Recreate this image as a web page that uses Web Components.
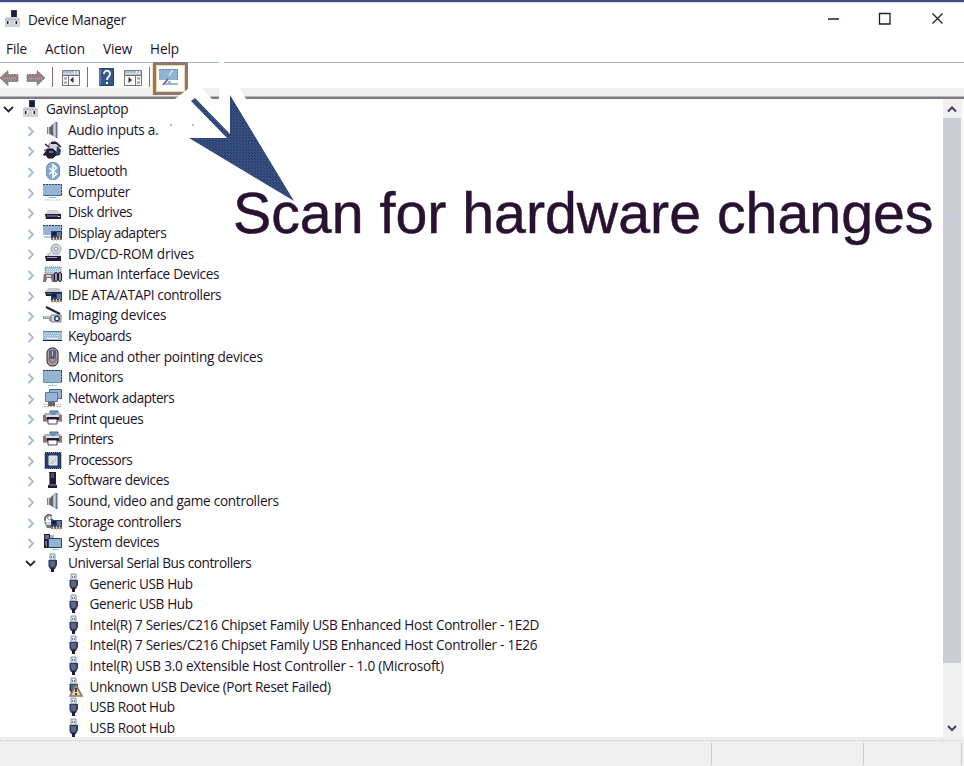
<!DOCTYPE html>
<html lang="en">
<head>
<meta charset="utf-8">
<title>Device Manager</title>
<style>
html,body{margin:0;width:964px;height:766px;overflow:hidden;background:#fff}
body{font-family:"Open Sans","Noto Sans",sans-serif;color:#1c1228}
</style>
</head>
<body>
<device-manager></device-manager>
<script>
const A='#94b4d2',N='#243f70',D='#251a33',B='#8d7572';
const usb=`<path d="M7 1h5v6H7z" fill="#dfe7ee" stroke="#7598bd"/><path d="M8 3h1v2H8zM10 3h1v2h-1z" fill="${B}"/><path d="M5 7h9v5l-2 4H7l-2-4z" fill="${N}"/><path d="M7 8h5v4l-1 2H8l-1-2z" fill="#6d6171"/><path d="M8 15h3v4H8z" fill="${D}"/><path d="M5.500 7v6" stroke="#7ba0c8"/>`;
const card=`<path d="M8 8h11v7H8z" fill="${N}"/><path d="M9 9h4v3H9z" fill="${D}"/><path d="M14 9h4v5h-4z" fill="#60769a"/><path d="M8 15h11v2H8z" fill="${B}"/><path d="M10 14h1v4h-1zM13 14h1v4h-1zM16 14h1v4h-1z" fill="#e8c782"/>`;
const speaker=`<path d="M4 7h4v7H4z" fill="${B}"/><path d="M7 7l6-6v17l-6-4z" fill="#a6b6c2"/><path d="M7 7l3-3v12l-3-2z" fill="#6d6268"/><path d="M13 2h1.500v16H13z" fill="#5f7899"/><path d="M5.500 7v7M11.500 5v10" stroke="#c9d4dc"/>`;
const printer=`<path d="M7 6V3h8v3" fill="${A}" stroke="${N}" stroke-width=".8"/><path d="M2 5h15l2 3v6H0V8z" fill="#a8afb6"/><path d="M7 4h7l-2 3H8z" fill="#6f94bb"/><path d="M0 7h4v6H0zM16 7h3v6h-3z" fill="${B}"/><path d="M3 7h13v2H3z" fill="#dde1e4"/><path d="M4 9h12v3H4z" fill="${D}"/><path d="M5 11h9v5H5z" fill="#fff" stroke="${D}" stroke-width=".8"/><path d="M0 13.500h3M16 13.500h3" stroke="${A}"/>`;
const pc=`<path d="M7 1h6v9H7z" fill="${N}"/><path d="M8 2h4v6H8z" fill="${D}"/><path d="M1 9.500l1.500-1.500h11L16 10v8H1z" fill="#cfd2d6"/><path d="M1 10.500h15" stroke="#a2adb8" stroke-dasharray="2 1"/><path d="M3 12h3v3H3zM10 12h3v3h-3z" fill="#f6f6f6"/><path d="M3 12h1.500v3H3zM11.500 12H13v3h-1.500z" fill="${D}"/>`;
const ICON={pc,usb,speaker,printer,
warn:usb+`<path d="M12 8l6 11H6z" fill="#f2d79b" stroke="${B}" stroke-width="1.6"/><path d="M12 11v4M12 16v2" stroke="${D}" stroke-width="1.6"/>`,
battery:`<path d="M6 4l5-3 5 3v8l-5 3-5-3z" fill="#cfd4d7" stroke="${B}"/><path d="M8 2h6v2H8z" fill="${D}"/><path d="M14 6l4 4-1 5-4 1z" fill="${N}"/><path d="M4 9h6l3 3v3l-3 3H5l-2-3H0M1 10h4" fill="${D}" stroke="${D}"/><path d="M6 11h4v2H6z" fill="#5c7292"/><path d="M2 4l4 3M13 3l5 4" stroke="${D}" stroke-width="1.5"/>`,
bluetooth:`<rect x="3" y="1" width="14" height="18" rx="6.5" fill="#86a9cc"/><rect x="3.500" y="1.500" width="13" height="17" rx="6" fill="none" stroke="#456f9f" stroke-dasharray="1 1"/><path d="M6.500 7l7 6-3.500 3.500v-13L13.500 7l-7 6" fill="none" stroke="#fff" stroke-width="1.5"/>`,
computer:`<path d="M0 2h19v12H0z" fill="${A}"/><path d="M0 2.500h19M18.500 2v12" stroke="#294975" stroke-dasharray="2 1"/><path d="M0 13.500h19" stroke="#46699a"/><path d="M6 15.500h7" stroke="#8fb0ce"/><path d="M1 18h18" stroke="#b5c3cf" stroke-dasharray="2 1"/>`,
disk:`<path d="M5 8h9l4 4H2z" fill="#d0d3d7"/><path d="M2 12h16v5H3z" fill="${D}"/><path d="M4 13h11v2H4z" fill="#4d5a6f"/><path d="M15 14h2v1h-2z" fill="#f2d89b"/>`,
display:`<path d="M0 2h19v10H0z" fill="${A}"/><path d="M0 2.500h19M18.500 2v9" stroke="${N}" stroke-dasharray="2 1"/><path d="M1 14h7" stroke="#9db8d0" stroke-width="1.500"/>`+card,
dvd:`<path d="M4 10h13l1 4H2z" fill="#dde0e3"/><path d="M2 13h16v5H3z" fill="${D}"/><path d="M4 14.500h10" stroke="#8ba8c6"/><circle cx="13" cy="6" r="5" fill="#cfd5d9" stroke="#93a3b2"/><circle cx="13" cy="6" r="1.800" fill="#fff" stroke="#829aaf"/><path d="M9 7l-4 6" stroke="${B}" stroke-dasharray="1 1"/>`,
hid:`<path d="M2 3h16v9H2z" fill="#a9c4da" stroke="${B}" stroke-dasharray="1 1"/><path d="M4 5.500h13M4 7.500h13" stroke="#e8eff4" stroke-dasharray="1 1"/><path d="M1 10h11v8H9l-1-4H4l-1 4H0z" fill="#796b70"/><path d="M3 11h5v2H3z" fill="#d1d3d6"/><rect x="11.500" y="8.500" width="3" height="9" rx="1.500" fill="#9f9ca2" stroke="${D}"/><rect x="15.500" y="8.500" width="3" height="9" rx="1.500" fill="#9f9ca2" stroke="${D}"/>`,
ide:`<path d="M5 3h11l3 4H2z" fill="#c8ccd1"/><path d="M2 7h17v4H3z" fill="${D}"/><path d="M4 8h8v1H4z" fill="#60769a"/>`+card,
imaging:`<path d="M3 2l14 7" stroke="${D}" stroke-width="2"/><path d="M8 10h10v7H8z" fill="#d5d9dc" stroke="${B}"/><path d="M0 11h8v5H6v-2H0z" fill="#8c949d"/><path d="M1 12h6" stroke="#f0f0f0"/><circle cx="14" cy="13.500" r="2.300" fill="#fff" stroke="${N}" stroke-width="1.500"/>`,
keyboard:`<path d="M0 5h19v10H0z" fill="#9dbcd7"/><path d="M0 5.500h19" stroke="#577fa8"/><path d="M0 14.500h19" stroke="${D}"/><path d="M2 7.500h16M1 9.500h16M2 11.500h16" stroke="#d6e3ed" stroke-dasharray="1 1"/><path d="M4 12.500h11" stroke="#eef2f4"/>`,
mouse:`<rect x="4" y="1" width="11" height="18" rx="5" fill="#a9a5a8" stroke="${D}"/><path d="M7 3v9M12 3v9" stroke="${D}"/><rect x="8" y="3" width="3" height="9" fill="#4c6288"/><path d="M6 11c1 6 6 6 7 0" stroke="${B}" stroke-width="2"/><path d="M9.500 4v5" stroke="#a9cbe7"/>`,
monitor:`<path d="M.500 3.500h18v12H.500z" fill="${A}" stroke="#6e93bb"/><path d="M0 3.500h19M18.500 4v12" stroke="${N}" stroke-dasharray="2 1"/><path d="M9.500 16v2M5 18.500h9" stroke="#a9cbe2"/>`,
network:`<path d="M6.500 1.500h12v9h-12z" fill="${A}" stroke="#3f628f"/><path d="M2.500 4.500h12v9h-12z" fill="${A}" stroke="#537ca8"/><path d="M0 16.500h18" stroke="#c4cfd6"/><path d="M5 14h7v4H5z" fill="#756267"/><path d="M1 18.500h17" stroke="#97a9b8" stroke-dasharray="2 1"/>`,
cpu:`<path d="M2 2.500h16v16H2z" fill="${N}" stroke="${D}" stroke-dasharray="1 1"/><path d="M6 6h8v9H6z" fill="#c7ced2" stroke="#eef0f1"/><path d="M7 12l5-5M7 9l2-2M11 14l2-2" stroke="#fff"/>`,
software:`<path d="M6 2h7v12H6z" fill="${D}"/><path d="M8 3h3v5H8z" fill="#4d5067"/><path d="M5 15h9v3H5z" fill="${D}"/><path d="M6 14h7v2H6z" fill="#5a5062"/><path d="M6.500 3v11" stroke="#68788f"/>`,
storage:`<path d="M2 9c-1-5 3-8 7-5M4 5l6 3" fill="none" stroke="#565467" stroke-width="1.500"/><circle cx="6.500" cy="6" r="1.800" fill="#fff" stroke="#889bae"/><path d="M1 10h9l2 3-2 3H4z" fill="#707681"/><path d="M3 10h6v3H3z" fill="#d1d5d8"/>`+card,
system:`<path d="M1 2h6v14H1z" fill="${D}"/><path d="M2 3h4v4H2zM2 9h2v4H2z" fill="#787078"/><path d="M7 3h4v3H7z" fill="#a4b4c3"/><path d="M5.500 6.500h13v9h-13z" fill="${A}" stroke="${N}"/><path d="M9 17.500h7" stroke="#b5cddd"/><path d="M3 14h1" stroke="#e7c98f"/>`
};
class PixelIcon extends HTMLElement{
 connectedCallback(){this.attachShadow({mode:'open'}).innerHTML=`<style>:host{display:block;width:20px;height:20px;flex:none}svg{display:block}</style><svg width="20" height="20" viewBox="0 0 20 20" fill="none">${ICON[this.getAttribute('name')]}</svg>`}
}
/* A single-line label whose tracking is adjusted to fill a given width. */
class FitLabel extends HTMLElement{
 connectedCallback(){
  this.attachShadow({mode:'open'}).innerHTML='<style>:host{display:block;white-space:pre;flex:none}span{display:inline-block}</style><span><slot></slot></span>';
  const s=this.shadowRoot.querySelector('span'),w=+this.getAttribute('w');
  if(w){const n=this.textContent.length;s.style.letterSpacing=((w-s.getBoundingClientRect().width)/n)+'px'}
 }
}
class TreeRow extends HTMLElement{
 connectedCallback(){
  const l=+this.getAttribute('level'),st=this.getAttribute('state');
  const arrow=st==='open'?'<path d="M1 4l4.500 4.500L10 4" stroke="#2d2438" stroke-width="1.800"/>':st==='closed'?'<path d="M3.500 3L8 7.500 3.500 12" stroke="#a6bccd" stroke-width="1.800"/>':'';
  this.attachShadow({mode:'open'}).innerHTML=`<style>:host{display:flex;box-sizing:border-box;height:20.63px;flex:none;align-items:flex-start;padding-left:${[3,25,47][l]}px;font-size:13.6px;line-height:20px}svg{width:11px;height:14px;flex:none;margin:4px ${[8,7,6][l]}px 0 0;fill:none}fit-label{margin-left:${l===0?4:l===1?5:5.500}px;margin-top:.2px}</style><svg>${arrow}</svg><pixel-icon name="${this.getAttribute('icon')}"></pixel-icon><fit-label w="${this.getAttribute('w')-.8}">${this.textContent}</fit-label>`;
 }
}
class TitleBar extends HTMLElement{
 connectedCallback(){this.attachShadow({mode:'open'}).innerHTML=`<style>:host{display:flex;box-sizing:border-box;height:37px;border-top:2px solid #3b5080;align-items:center;padding:0 20px 2px 4px;font-size:13.6px;box-shadow:inset 0 1px #d3d9e0}fit-label{margin-left:4px;margin-top:1px}.s{flex:1}.c{display:block;fill:none;stroke:#251833;margin-top:-1px}</style>
 <pixel-icon name="pc"></pixel-icon><fit-label w="98">Device Manager</fit-label><div class="s"></div>
 <svg class="c" width="118" height="18"><path d="M2 10h11" stroke-width="1.500"/><path d="M53.500 4.500h10.500v10.500h-10.500z" stroke-width="1.300"/><path d="M106.500 4.500l10 10M116.500 4.500l-10 10" stroke-width="1.300"/></svg>`}
}
class MenuBar extends HTMLElement{
 connectedCallback(){this.attachShadow({mode:'open'}).innerHTML=`<style>:host{display:flex;height:25px;align-items:center;padding-left:6px;font-size:13.6px;border-bottom:1px solid #9bb9d2}fit-label{margin-right:18px;margin-top:-2px}</style><fit-label w="21">File</fit-label><fit-label w="40">Action</fit-label><fit-label w="29">View</fit-label><fit-label w="29">Help</fit-label>`}
}
class ToolBar extends HTMLElement{
 connectedCallback(){
  const L='#84706f',win=p=>`<svg width="20" height="18"><path d="M1.500 1.500h17v15h-17z" fill="#f7f8f8" stroke="${L}"/><path d="M2 2h16v4H2z" fill="#a5bfd4"/><path d="M2 4.500h16" stroke="#d8e2ea"/><path d="M13 2h1v2h-1zM16 2h1v2h-1z" fill="#fff"/><path d="M1 6.500h18" stroke="${L}"/>${p}</svg>`;
  const left=win(`<path d="M7.500 7v9" stroke="${L}"/><path d="M3 9.500h3M3 13.500h3" stroke="#86a3bc" stroke-width="2"/><path d="M12.500 8v6L9 11z" fill="#3a2b3c"/>`),right=win(`<path d="M12.500 7v9" stroke="${L}"/><path d="M14 9.500h3M14 13.500h3" stroke="#86a3bc" stroke-width="2"/><path d="M5.500 8v6L9 11z" fill="#3a2b3c"/>`);
  const arr=d=>`<svg width="20" height="18" viewBox="0 0 20 18"><path ${d} d="M0 9l8-7.500V5.500h10v7H8v4z" fill="#938286" stroke="#8a7070" stroke-dasharray="2 1"/><path ${d} d="M3 9.500h14" stroke="#a9b0ba" stroke-dasharray="1 1" stroke-width="1.500"/></svg>`;
  this.attachShadow({mode:'open'}).innerHTML=`<style>:host{display:grid;grid-template-columns:26px 26px 9px 26px 10px 26px 26px 4px 35px;height:36px;box-sizing:border-box;background:linear-gradient(#fff 25px,#efefef 25px 33px,#a6bed3 33px);border-bottom:2px solid #8f7674}svg{display:block;fill:none;margin-top:6px}.v{width:1px;height:20px;background:#866e6d;margin-top:4px}.box{box-sizing:border-box;width:35px;height:33px;border:3px solid #8f7674;background:#fff;margin-top:-1px;box-shadow:inset 0 0 0 1px #f0d79d,-1px 0 #f4dfaf;position:relative;padding:0 0 0 3px}.box svg{margin-top:1px}</style>
 ${arr('')}${arr('transform="translate(19 0) scale(-1 1)"')}<i class="v"></i>${left}<i class="v"></i><svg width="20" height="20" style="margin-top:5px"><path d="M2.500.500h14v17h-14z" fill="#315889" stroke="#263f66"/><path d="M3 1v16" stroke="#91aeca"/><path d="M7 6c0-4.500 6.500-4 6 0 0 2.500-3 2.500-3 6" stroke="#e4ebf1" stroke-width="2"/><path d="M9 14h2v2H9z" fill="#fff"/></svg>${right}<i class="v"></i>
 <div class="box"><svg width="22" height="22"><path d="M0 3h19v11H0z" fill="#91b2d1"/><path d="M0 3.500h19M18.500 3v11" stroke="#5f88b4" stroke-dasharray="2 1"/><path d="M13.500 4l-3.500 6" stroke="#e1ebf2" stroke-width="1.300"/><path d="M9 13l-5 6" stroke="#6b6370" stroke-width="1.800"/><path d="M9 16h3M6 18h13" stroke="#79a0c3" stroke-width="1.500"/></svg></div>`}
}
class ScrollBar extends HTMLElement{
 connectedCallback(){this.attachShadow({mode:'open'}).innerHTML=`<style>:host{display:flex;flex-direction:column;width:18px;background:#f0f0f0;margin-right:1px;border-right:2px solid #f4f5f6}svg{display:block;fill:none;stroke:#454158;stroke-width:2;flex:none}.t{height:545px;background:#c9ced4 radial-gradient(circle at 3px 3px,#dfd8bd .6px,transparent 1px) 0 0/8px 11px}.s{flex:1}</style><svg width="18" height="19"><path d="M5 12.500l4-4 4 4"/></svg><div class="t"></div><div class="s"></div><svg width="18" height="18"><path d="M5 7l4 4 4-4"/></svg>`}
}
class StatusBar extends HTMLElement{
 connectedCallback(){this.attachShadow({mode:'open'}).innerHTML=`<style>:host{display:grid;grid-template-columns:712px 152px 98px;box-sizing:border-box;height:29px;background:#efefef;padding-top:5px}:host::before{content:"";grid-column:1/-1;height:0;border-top:1px dotted #c5ccd2;margin-top:-2px}i{height:22px;border-right:1px solid #ccc}</style><i></i><i></i><i></i>`}
}
class CalloutArrow extends HTMLElement{
 connectedCallback(){this.attachShadow({mode:'open'}).innerHTML=`<style>:host{position:absolute;left:0;top:0;width:964px;height:260px}svg{display:block}</style><svg width="964" height="260"><defs><pattern id="d" width="3" height="3" patternUnits="userSpaceOnUse"><path d="M0 0h3v3H0z" fill="#345181"/><path d="M0 0h1v1H0zM2 2h1v1H2z" fill="#2a315f"/></pattern></defs><path d="M175 99l14-11h13l10 11zM219 99V62h5l16 26 6 11z" fill="#fff"/><path d="M191 101l4-3 35 36V95l64 106-105-63h38z" fill="url(#d)"/><path d="M170 125h2M192 125h2" stroke="#807785"/><text x="233" y="233" font-family="Liberation Sans,sans-serif" font-size="58" textLength="700.500" lengthAdjust="spacingAndGlyphs" fill="#28122f" stroke="#28122f" stroke-width=".5">Scan for hardware changes</text></svg>`}
}
class DeviceManager extends HTMLElement{
 connectedCallback(){
  const rows=[[0,'open','pc',83,'GavinsLaptop'],[1,'closed','speaker',91,'Audio inputs a.'],[1,'closed','battery',52,'Batteries'],[1,'closed','bluetooth',60,'Bluetooth'],[1,'closed','computer',63,'Computer'],[1,'closed','disk',65,'Disk drives'],[1,'closed','display',99,'Display adapters'],[1,'closed','dvd',127,'DVD/CD-ROM drives'],[1,'closed','hid',152,'Human Interface Devices'],[1,'closed','ide',154,'IDE ATA/ATAPI controllers'],[1,'closed','imaging',99,'Imaging devices'],[1,'closed','keyboard',64,'Keyboards'],[1,'closed','mouse',195.500,'Mice and other pointing devices'],[1,'closed','monitor',56,'Monitors'],[1,'closed','network',107,'Network adapters'],[1,'closed','printer',76,'Print queues'],[1,'closed','printer',46,'Printers'],[1,'closed','cpu',65,'Processors'],[1,'closed','software',102,'Software devices'],[1,'closed','speaker',211.500,'Sound, video and game controllers'],[1,'closed','storage',114,'Storage controllers'],[1,'closed','system',92,'System devices'],[1,'open','usb',184,'Universal Serial Bus controllers'],[2,'','usb',104,'Generic USB Hub'],[2,'','usb',104,'Generic USB Hub'],[2,'','usb',450.5,'Intel(R) 7 Series/C216 Chipset Family USB Enhanced Host Controller - 1E2D'],[2,'','usb',448.500,'Intel(R) 7 Series/C216 Chipset Family USB Enhanced Host Controller - 1E26'],[2,'','usb',355,'Intel(R) USB 3.0 eXtensible Host Controller - 1.0 (Microsoft)'],[2,'','warn',242,'Unknown USB Device (Port Reset Failed)'],[2,'','usb',86,'USB Root Hub'],[2,'','usb',86,'USB Root Hub']];
  this.attachShadow({mode:'open'}).innerHTML=`<style>:host{display:flex;flex-direction:column;width:964px;height:766px;position:relative;background:#fff}.m{display:flex;flex:1;min-height:0}.tree{flex:1;display:flex;flex-direction:column}title-bar,menu-bar,tool-bar,status-bar{flex:none}</style><title-bar></title-bar><menu-bar></menu-bar><tool-bar></tool-bar><div class="m"><div class="tree">${rows.map(r=>`<tree-row level="${r[0]}" state="${r[1]}" icon="${r[2]}" w="${r[3]}">${r[4]}</tree-row>`).join('')}</div><scroll-bar></scroll-bar></div><status-bar></status-bar><callout-arrow></callout-arrow>`}
}
customElements.define('pixel-icon',PixelIcon);
customElements.define('fit-label',FitLabel);
customElements.define('tree-row',TreeRow);
customElements.define('title-bar',TitleBar);
customElements.define('menu-bar',MenuBar);
customElements.define('tool-bar',ToolBar);
customElements.define('scroll-bar',ScrollBar);
customElements.define('status-bar',StatusBar);
customElements.define('callout-arrow',CalloutArrow);
customElements.define('device-manager',DeviceManager);
</script>
</body>
</html>
